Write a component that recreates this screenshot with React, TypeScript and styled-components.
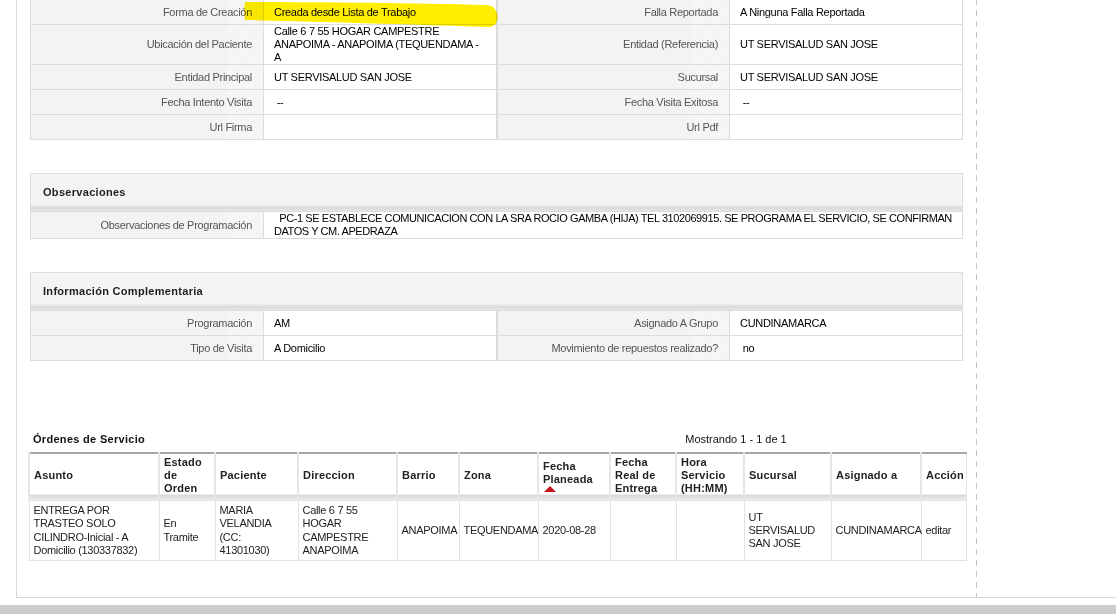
import React from 'react'
import styled, { createGlobalStyle } from 'styled-components'

const GlobalStyle = createGlobalStyle`
  html, body {
    margin: 0;
    padding: 0;
    background: #fff;
    overflow: hidden;
  }
  body {
    font-family: "Liberation Sans", Arial, sans-serif;
    font-size: 11px;
    letter-spacing: -0.3px;
    color: #222;
  }
`

type Pair = { label: string; value: string }

const detailRows: Pair[][] = [
  [
    { label: 'Forma de Creación', value: 'Creada desde Lista de Trabajo' },
    { label: 'Falla Reportada', value: 'A Ninguna Falla Reportada' },
  ],
  [
    { label: 'Ubicación del Paciente', value: 'Calle 6 7 55 HOGAR CAMPESTRE ANAPOIMA - ANAPOIMA (TEQUENDAMA - A' },
    { label: 'Entidad (Referencia)', value: 'UT SERVISALUD SAN JOSE' },
  ],
  [
    { label: 'Entidad Principal', value: 'UT SERVISALUD SAN JOSE' },
    { label: 'Sucursal', value: 'UT SERVISALUD SAN JOSE' },
  ],
  [
    { label: 'Fecha Intento Visita', value: '\u00a0--' },
    { label: 'Fecha Visita Exitosa', value: '\u00a0--' },
  ],
  [
    { label: 'Url Firma', value: '' },
    { label: 'Url Pdf', value: '' },
  ],
]

const extraRows: Pair[][] = [
  [
    { label: 'Programación', value: 'AM' },
    { label: 'Asignado A Grupo', value: 'CUNDINAMARCA' },
  ],
  [
    { label: 'Tipo de Visita', value: 'A Domicilio' },
    { label: 'Movimiento de repuestos realizado?', value: '\u00a0no' },
  ],
]

const orderColumns = [
  { title: 'Asunto', width: 130 },
  { title: 'Estado de Orden', width: 56 },
  { title: 'Paciente', width: 83 },
  { title: 'Direccion', width: 99 },
  { title: 'Barrio', width: 62 },
  { title: 'Zona', width: 79 },
  { title: 'Fecha Planeada', width: 72, sorted: true },
  { title: 'Fecha Real de Entrega', width: 66 },
  { title: 'Hora Servicio (HH:MM)', width: 68 },
  { title: 'Sucursal', width: 87 },
  { title: 'Asignado a', width: 90 },
  { title: 'Acción', width: 45 },
]

const orderRow = [
  'ENTREGA POR TRASTEO SOLO CILINDRO-Inicial - A Domicilio (130337832)',
  'En Tramite',
  'MARIA VELANDIA (CC: 41301030)',
  'Calle 6 7 55 HOGAR CAMPESTRE ANAPOIMA',
  'ANAPOIMA',
  'TEQUENDAMA',
  '2020-08-28',
  '',
  '',
  'UT SERVISALUD SAN JOSE',
  'CUNDINAMARCA',
  'editar',
]

const DetailGrid = ({ rows }: { rows: Pair[][] }) => (
  <DetailTable>
    <tbody>
      {rows.map((row, i) => (
        <tr key={i}>
          {row.map((pair, j) => (
            <React.Fragment key={pair.label}>
              <Label $divider={j > 0}>{pair.label}</Label>
              <Value>{pair.value}</Value>
            </React.Fragment>
          ))}
        </tr>
      ))}
    </tbody>
  </DetailTable>
)

export default function App() {
  return (
    <>
      <GlobalStyle />
      <Frame>
        <Main>
          <Highlight width="256" height="28" viewBox="0 0 256 28">
            <path d="M1,2 C70,2 170,3 243,5 C256,6 257,25 246,27 C180,25 90,22 1,20 C0,14 0,7 1,2 Z" fill="#ffee00" />
          </Highlight>

          <DetailGrid rows={detailRows} />

          <Section>
            <SectionHeader>Observaciones</SectionHeader>
            <DetailTable>
              <tbody>
                <tr>
                  <Label>Observaciones de Programación</Label>
                  <Value colSpan={3} $wide>
                    {'\u00a0\u00a0PC-1 SE ESTABLECE COMUNICACION CON LA SRA ROCIO GAMBA (HIJA) TEL 3102069915. SE PROGRAMA EL SERVICIO, SE CONFIRMAN DATOS Y CM. APEDRAZA'}
                  </Value>
                </tr>
              </tbody>
            </DetailTable>
          </Section>

          <Section>
            <SectionHeader>Información Complementaria</SectionHeader>
            <DetailGrid rows={extraRows} />
          </Section>

          <Orders>
            <OrdersBar>
              <OrdersTitle>Órdenes de Servicio</OrdersTitle>
              <Pager>Mostrando 1 - 1 de 1</Pager>
            </OrdersBar>
            <OrdersTable>
              <colgroup>
                {orderColumns.map((c) => (
                  <col key={c.title} style={{ width: c.width }} />
                ))}
              </colgroup>
              <thead>
                <tr>
                  {orderColumns.map((c) => (
                    <HeadCell key={c.title}>
                      {c.title}
                      {c.sorted && <SortArrow />}
                    </HeadCell>
                  ))}
                </tr>
              </thead>
              <tbody>
                <tr>
                  {orderRow.map((text, i) => (
                    <BodyCell key={i}>{text}</BodyCell>
                  ))}
                </tr>
              </tbody>
            </OrdersTable>
          </Orders>
        </Main>
        <Sidebar />
      </Frame>
      <Footer />
    </>
  )
}

const Frame = styled.div`
  display: flex;
  width: 1200px;
  margin: -1px 0 0 16px;
  border-left: 1px solid #d8d8d8;
  border-bottom: 1px solid #d8d8d8;
`

const Main = styled.div`
  position: relative;
  width: 933px;
  padding: 0 13px 36px;
`

const Sidebar = styled.div`
  flex: 1;
  background: linear-gradient(#c4c4c4 55%, transparent 55%) 0 0 / 1px 11px repeat-y;
`

const Highlight = styled.svg`
  position: absolute;
  left: 227px;
  top: 1px;
  mix-blend-mode: multiply;
  pointer-events: none;
  z-index: 1;
`

const DetailTable = styled.table`
  width: 100%;
  table-layout: fixed;
  border-collapse: collapse;
  border: 1px solid #dcdcdc;
`

const Label = styled.td<{ $divider?: boolean }>`
  height: 24px;
  padding: 0 11px 0 10px;
  text-align: right;
  vertical-align: middle;
  line-height: 13px;
  color: #555;
  border: 1px solid #dcdcdc;
  border-left-width: ${(p) => (p.$divider ? '2px' : '1px')};
  background:
    repeating-linear-gradient(-45deg, rgba(255, 255, 255, 0.55) 0 1px, transparent 1px 3px) right top / 36px 100% no-repeat,
    #f3f3f3;
`

const Value = styled.td<{ $wide?: boolean }>`
  padding: ${(p) => (p.$wide ? '0 4px 0 10px' : '0 10px')};
  letter-spacing: ${(p) => (p.$wide ? '-0.42px' : '-0.3px')};
  vertical-align: middle;
  line-height: 13px;
  color: #000;
  background: #fff;
  border: 1px solid #dcdcdc;
`

const Section = styled.div`
  margin-top: 33px;
`

const SectionHeader = styled.div`
  height: 37px;
  line-height: 36px;
  padding: 0 12px;
  font-weight: bold;
  letter-spacing: 0.3px;
  color: #1e1e1e;
  border: 1px solid #dcdcdc;
  border-bottom: none;
  background: linear-gradient(
    to bottom,
    #f4f4f4 0,
    #f4f4f4 31px,
    #e6e6e6 32px,
    #dadada 34px,
    #e6e6e6 37px
  );
`

const Orders = styled.div`
  margin: 72px -2px 0;
`

const OrdersBar = styled.div`
  display: grid;
  grid-template-columns: 1fr 448px;
  align-items: center;
  height: 13px;
  line-height: 13px;
  padding: 0 5px;
  margin-bottom: 6px;
`

const OrdersTitle = styled.div`
  font-weight: bold;
  letter-spacing: 0.3px;
  color: #111;
`

const Pager = styled.div`
  text-align: center;
  letter-spacing: 0;
  color: #111;
`

const OrdersTable = styled.table`
  width: 100%;
  table-layout: fixed;
  border-collapse: collapse;
  border-top: 2px solid #a8a8a8;
`

const HeadCell = styled.th`
  padding: 2px 4px 5px;
  text-align: left;
  vertical-align: middle;
  font-weight: bold;
  letter-spacing: 0.2px;
  line-height: 13px;
  color: #222;
  border-left: 2px solid #e6e6e6;
  border-right: 1px solid #e6e6e6;
  background: linear-gradient(
    to bottom,
    #fff 0,
    #fff calc(100% - 6px),
    #d8d8d8 calc(100% - 5px),
    #ececec 100%
  );
`

const SortArrow = styled.span`
  display: block;
  width: 0;
  height: 0;
  margin: 0 0 0 1px;
  border-left: 6px solid transparent;
  border-right: 6px solid transparent;
  border-bottom: 6px solid #c4161c;
`

const BodyCell = styled.td`
  padding: 3px 4px;
  vertical-align: middle;
  line-height: 13.3px;
  color: #222;
  border: 1px solid #e2e2e2;
`

const Footer = styled.div`
  height: 9px;
  margin-top: 7px;
  background: #cccccc;
`
